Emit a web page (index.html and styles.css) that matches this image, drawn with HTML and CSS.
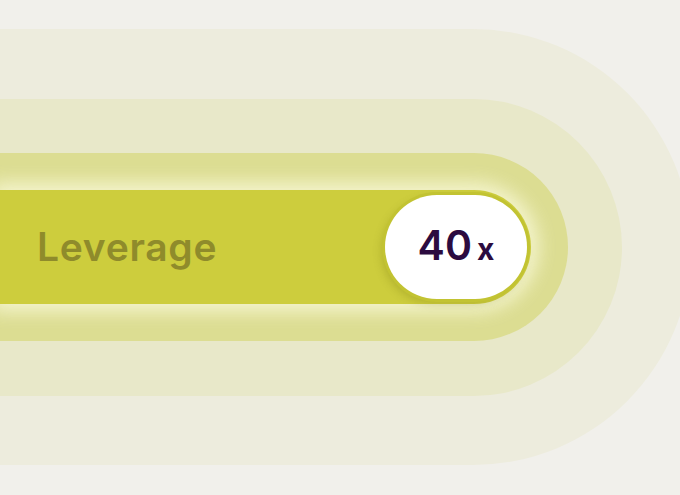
FILE: index.html
```html
<!DOCTYPE html>
<html lang="en">
<head>
    <meta charset="UTF-8">
    <meta name="viewport" content="width=device-width, initial-scale=1.0">
    <title>Leverage</title>
    <link rel="stylesheet" href="styles.css">
</head>
<body>
    <main>
        <!-- Ringe um den Regler -->
        <div class="ring ring-outer">
            <div class="ring ring-middle">
                <div class="ring ring-inner">
                    <!-- Regler -->
                    <div class="leverage-bar">
                        <span class="leverage-label">Leverage</span>
                        <div class="leverage-knob">
                            <span class="knob-value">40</span><span class="knob-unit">x</span>
                        </div>
                    </div>
                </div>
            </div>
        </div>
    </main>
</body>
</html>
```

FILE: styles.css
```css
* {
    margin: 0;
    padding: 0;
    box-sizing: border-box;
}

body {
    font-family: Inter, "Open Sans", sans-serif;
    background-color: #f1f0eb;
    width: 680px;
    height: 495px;
    overflow: hidden;
}

main {
    padding-top: 29px;
}

.ring {
    display: flex;
    flex-direction: column;
}

.ring-outer {
    width: 691px;
    height: 436px;
    padding: 70px 69px 69px 0;
    background-color: #edecdd;
    border-radius: 0 218px 218px 0;
}

.ring-middle {
    height: 100%;
    padding: 54px 54px 55px 0;
    background-color: #e8e8c9;
    border-radius: 0 149px 149px 0;
}

.ring-inner {
    height: 100%;
    padding: 37px 37px 37px 0;
    background-color: #dcdd92;
    border-radius: 0 94px 94px 0;
}

.leverage-bar {
    height: 100%;
    display: flex;
    align-items: center;
    justify-content: space-between;
    padding: 0 4px 0 37px;
    background-color: #cdcd3d;
    border-radius: 0 57px 57px 0;
    box-shadow: 0 0 18px 8px rgba(248, 248, 214, 0.85);
}

.leverage-label {
    font-size: 39px;
    font-weight: 600;
    color: #8f8b2b;
    letter-spacing: 0.7px;
    margin-top: -2px;
}

.leverage-knob {
    width: 142px;
    height: 104px;
    display: flex;
    align-items: baseline;
    justify-content: center;
    padding-top: 30px;
    background-color: #fff;
    border-radius: 52px;
    box-shadow: 0 0 0 3px #c2c332, -3px 4px 10px rgba(110, 110, 10, 0.3);
    color: #2c0b40;
    font-weight: 600;
}

.knob-value {
    font-size: 41px;
    line-height: 1;
}

.knob-unit {
    font-size: 30px;
    font-weight: 700;
    margin-left: 5px;
}
```
